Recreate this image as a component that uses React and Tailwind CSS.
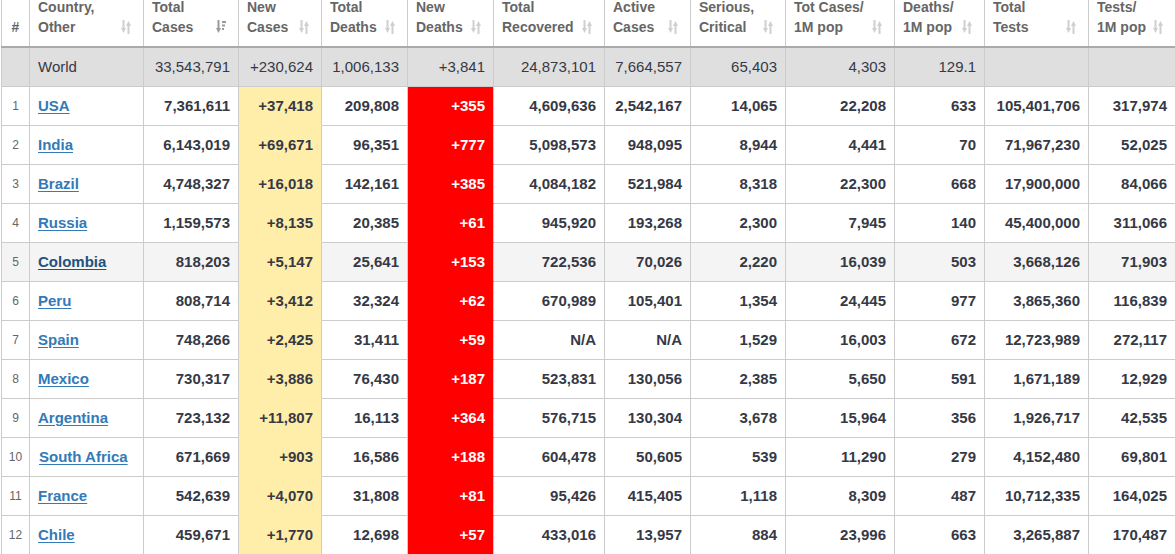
const cols = 'grid grid-cols-[29px_114px_95px_83px_86px_86px_111px_86px_95px_109px_90px_104px_87px]';

const headers = [
  ['Country,', 'Other'],
  ['Total', 'Cases'],
  ['New', 'Cases'],
  ['Total', 'Deaths'],
  ['New', 'Deaths'],
  ['Total', 'Recovered'],
  ['Active', 'Cases'],
  ['Serious,', 'Critical'],
  ['Tot Cases/', '1M pop'],
  ['Deaths/', '1M pop'],
  ['Total', 'Tests'],
  ['Tests/', '1M pop'],
];

const world = ['33,543,791', '+230,624', '1,006,133', '+3,841', '24,873,101', '7,664,557', '65,403', '4,303', '129.1', '', ''];

const rows = [
  ['USA', '7,361,611', '+37,418', '209,808', '+355', '4,609,636', '2,542,167', '14,065', '22,208', '633', '105,401,706', '317,974'],
  ['India', '6,143,019', '+69,671', '96,351', '+777', '5,098,573', '948,095', '8,944', '4,441', '70', '71,967,230', '52,025'],
  ['Brazil', '4,748,327', '+16,018', '142,161', '+385', '4,084,182', '521,984', '8,318', '22,300', '668', '17,900,000', '84,066'],
  ['Russia', '1,159,573', '+8,135', '20,385', '+61', '945,920', '193,268', '2,300', '7,945', '140', '45,400,000', '311,066'],
  ['Colombia', '818,203', '+5,147', '25,641', '+153', '722,536', '70,026', '2,220', '16,039', '503', '3,668,126', '71,903'],
  ['Peru', '808,714', '+3,412', '32,324', '+62', '670,989', '105,401', '1,354', '24,445', '977', '3,865,360', '116,839'],
  ['Spain', '748,266', '+2,425', '31,411', '+59', 'N/A', 'N/A', '1,529', '16,003', '672', '12,723,989', '272,117'],
  ['Mexico', '730,317', '+3,886', '76,430', '+187', '523,831', '130,056', '2,385', '5,650', '591', '1,671,189', '12,929'],
  ['Argentina', '723,132', '+11,807', '16,113', '+364', '576,715', '130,304', '3,678', '15,964', '356', '1,926,717', '42,535'],
  ['South Africa', '671,669', '+903', '16,586', '+188', '604,478', '50,605', '539', '11,290', '279', '4,152,480', '69,801'],
  ['France', '542,639', '+4,070', '31,808', '+81', '95,426', '415,405', '1,118', '8,309', '487', '10,712,335', '164,025'],
  ['Chile', '459,671', '+1,770', '12,698', '+57', '433,016', '13,957', '884', '23,996', '663', '3,265,887', '170,487'],
];

const SortIcon = () => (
  <svg width="10" height="14" viewBox="0 0 10 14" className="shrink-0">
    <rect x="1.5" y="0" width="2" height="9" fill="#d0d0d0" />
    <polygon points="0,8 5,8 2.5,13" fill="#d0d0d0" />
    <rect x="6.5" y="5" width="2" height="9" fill="#d0d0d0" />
    <polygon points="5,6 10,6 7.5,1" fill="#d0d0d0" />
  </svg>
);

const SortedIcon = () => (
  <svg width="10" height="14" viewBox="0 0 10 14" className="shrink-0">
    <rect x="1.5" y="0" width="2" height="9" fill="#9a9a9a" />
    <polygon points="0,8 5,8 2.5,13" fill="#9a9a9a" />
    <rect x="6" y="1" width="4" height="2" fill="#9a9a9a" />
    <rect x="6" y="4.5" width="3" height="2" fill="#9a9a9a" />
    <rect x="6" y="8" width="2" height="2" fill="#9a9a9a" />
  </svg>
);

const HeaderRow = () => (
  <div className={`${cols} grid-rows-[46px] h-[48px] border-b-2 border-b-[#aaaaaa]`}>
    <div className="flex items-end justify-center overflow-hidden pb-[9px] border-l border-r border-[#cccccc] text-[14px] font-bold leading-5 text-[#666666]">
      #
    </div>
    {headers.map(([a, b], i) => (
      <div key={i} className="flex items-end justify-between overflow-hidden pl-2 pr-[12px] pb-[9px] border-r border-[#cccccc] text-[14px] font-bold leading-5 text-[#666666]">
        <div>
          <div className="whitespace-nowrap">{a}</div>
          <div className="whitespace-nowrap">{b}</div>
        </div>
        <div className="mb-[3px]">{i === 1 ? <SortedIcon /> : <SortIcon />}</div>
      </div>
    ))}
  </div>
);

const WorldRow = () => (
  <div className={`${cols} h-[39px] bg-[#dfdfdf] text-[15px] text-[#363945]`}>
    <div className="border-l border-r border-b border-[#cccccc]" />
    <div className="flex items-center pl-2 border-r border-b border-[#cccccc]">World</div>
    {world.map((v, i) => (
      <div key={i} className="flex items-center justify-end pr-2 border-r border-b border-[#cccccc]">
        {v}
      </div>
    ))}
  </div>
);

const CountryRow = ({ n, data }) => {
  const [name, ...vals] = data;
  const hover = name === 'Colombia';
  return (
    <div className={`${cols} h-[39px] text-[15px] font-bold text-[#363945] ${hover ? 'bg-[#f4f4f4]' : 'bg-white'}`}>
      <div className="flex items-center justify-center border-l border-r border-b border-[#cccccc] text-[12px] font-normal text-[#666666]">
        {n}
      </div>
      <div className={`flex items-center border-r border-b border-[#cccccc] ${name === 'South Africa' ? 'pl-[9px]' : 'pl-2'}`}>
        <a href="#" className={`underline underline-offset-2 whitespace-nowrap ${hover ? 'text-[#23527c]' : 'text-[#337ab7]'}`}>
          {name}
        </a>
      </div>
      {vals.map((v, i) => {
        let cell = 'border-r border-b border-[#cccccc]';
        if (i === 1) cell = 'bg-[#ffeeaa] border-r border-b border-r-[#cccccc] border-b-[#ffeeaa]';
        if (i === 3) cell = 'bg-[#ff0000] text-white border-r border-b border-r-[#cccccc] border-b-[#ff0000]';
        return (
          <div key={i} className={`flex items-center justify-end pr-2 ${cell}`}>
            {v}
          </div>
        );
      })}
    </div>
  );
};

export default function App() {
  return (
    <div className="w-[1175px] h-[554px] overflow-hidden bg-white font-['Liberation_Sans',Arial,sans-serif]">
      <div className="ml-px w-[1175px]">
        <HeaderRow />
        <WorldRow />
        {rows.map((r, i) => (
          <CountryRow key={i} n={i + 1} data={r} />
        ))}
      </div>
    </div>
  );
}
